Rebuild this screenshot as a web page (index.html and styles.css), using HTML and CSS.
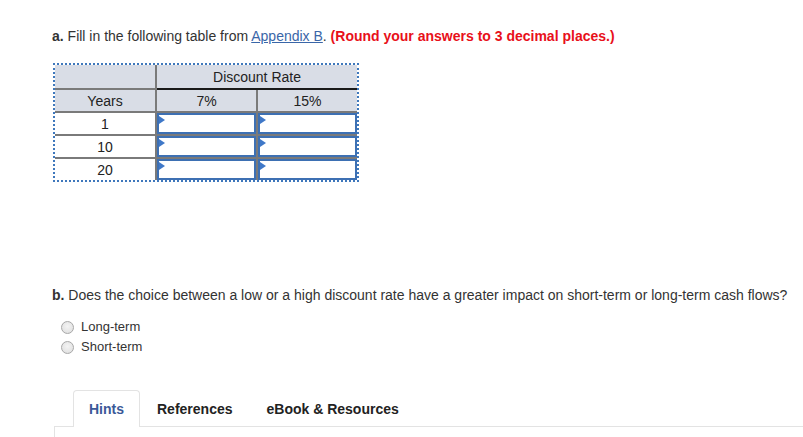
FILE: index.html
```html
<!DOCTYPE html>
<html>
<head>
<meta charset="utf-8">
<link rel="stylesheet" href="styles.css">
</head>
<body>
<div class="page">
  <p class="q q-a"><b>a.</b> Fill in the following table from <a href="#" class="link">Appendix B</a>. <span class="warn">(Round your answers to 3 decimal places.)</span></p>

  <div class="tbl-wrap">
    <table class="tbl">
      <tr class="hdr hdr-top">
        <th class="c-years"></th>
        <th colspan="2" class="group">Discount Rate</th>
      </tr>
      <tr class="hdr">
        <th class="c-years">Years</th>
        <th class="c-val">7%</th>
        <th class="c-val">15%</th>
      </tr>
      <tr>
        <td class="c-years">1</td>
        <td class="inp"><div class="box"><span class="tri"></span></div></td>
        <td class="inp"><div class="box"><span class="tri"></span></div></td>
      </tr>
      <tr>
        <td class="c-years">10</td>
        <td class="inp"><div class="box"><span class="tri"></span></div></td>
        <td class="inp"><div class="box"><span class="tri"></span></div></td>
      </tr>
      <tr>
        <td class="c-years">20</td>
        <td class="inp"><div class="box"><span class="tri"></span></div></td>
        <td class="inp"><div class="box"><span class="tri"></span></div></td>
      </tr>
    </table>
  </div>

  <p class="q q-b"><b>b.</b> Does the choice between a low or a high discount rate have a greater impact on short-term or long-term cash flows?</p>

  <div class="opts">
    <label class="opt"><span class="radio"></span>Long-term</label>
    <label class="opt"><span class="radio"></span>Short-term</label>
  </div>

  <div class="tabs">
    <div class="tab active">Hints</div>
    <div class="tab">References</div>
    <div class="tab">eBook &amp; Resources</div>
  </div>
  <div class="panel"></div>
</div>
</body>
</html>
```

FILE: styles.css
```css
html, body {
  margin: 0;
  padding: 0;
  background: #fff;
}
body {
  font-family: "Liberation Sans", Arial, sans-serif;
  font-size: 14px;
  color: #333;
}
.page {
  padding: 28px 0 0 52px;
}
.q {
  margin: 0;
  line-height: 16px;
}
.link {
  color: #3a66a8;
  text-decoration: underline;
}
.warn {
  color: #e8101a;
  font-weight: bold;
}
.tbl-wrap {
  margin: 19px 0 0 1px;
  display: inline-block;
  border: 2px dotted #3f78bc;
}
.tbl {
  border-collapse: collapse;
  font-size: 14px;
  color: #222;
}
.tbl th, .tbl td {
  border: 2px solid #7a7a7a;
  padding: 0;
  height: 21px;
  text-align: center;
  font-weight: normal;
}
.hdr-top th {
  height: 23px;
}
.tbl tr:first-child th { border-top: 0; }
.tbl tr th:first-child, .tbl tr td:first-child { border-left: 0; }
.tbl tr th:last-child, .tbl tr td:last-child { border-right: 0; }
.tbl tr:last-child td { border-bottom: 0; }
.hdr th {
  background: #d9dde6;
}
.group {
  border-bottom: 2px solid #1a1a1a !important;
}
.c-years {
  width: 100px;
  background: #fff;
}
.hdr .c-years { background: #d9dde6; }
.c-val { width: 99px; }
.inp {
  width: 99px;
  padding: 0 !important;
  vertical-align: top;
}
.box {
  position: relative;
  height: 17px;
  border: 2px solid #3d70b3;
  background: #fff;
}
.tri {
  position: absolute;
  left: 0;
  top: 1px;
  width: 0;
  height: 0;
  border-top: 4px solid transparent;
  border-bottom: 4px solid transparent;
  border-left: 6px solid #3f78c8;
}
.q-b {
  margin-top: 102px;
}
.opts {
  margin-top: 14px;
  padding-left: 9px;
}
.opt {
  display: flex;
  align-items: center;
  height: 20px;
  line-height: 20px;
  font-size: 13px;
}
.radio {
  width: 11px;
  height: 11px;
  border-radius: 50%;
  border: 1px solid #a8a8a8;
  background: radial-gradient(circle at 50% 40%, #f4f4f4 0%, #dcdcdc 100%);
  margin-right: 7px;
}
.tabs {
  margin: 33px 0 0 21px;
  display: flex;
  height: 36px;
}
.tab {
  font-weight: bold;
  font-size: 14px;
  color: #222;
  line-height: 36px;
  padding: 0 16px;
  border: 1px solid transparent;
  border-bottom: 0;
}
.tab.active {
  color: #3b5998;
  border-color: #e3e3e3;
  border-radius: 4px 4px 0 0;
  background: #fff;
  padding: 0 15px;
  position: relative;
  z-index: 1;
  margin-bottom: -1px;
}
.panel {
  margin-left: 2px;
  height: 20px;
  border-top: 1px solid #e3e3e3;
  border-left: 1px solid #e3e3e3;
}
```
